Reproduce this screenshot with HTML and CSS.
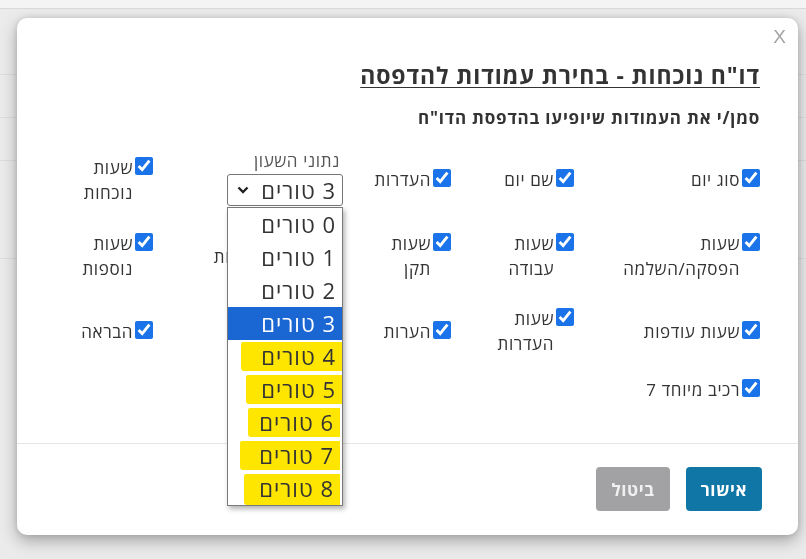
FILE: index.html
```html
<!DOCTYPE html>
<html lang="he" dir="rtl">
<head>
  <meta charset="UTF-8" />
  <meta name="viewport" content="width=device-width, initial-scale=1.0"/>
  <title>דו"ח נוכחות</title>
  <link rel="stylesheet" href="styles.css">
</head>
<body>
  <div class="page">
    <div class="page-top"></div>
    <div class="page-row short"></div>
    <div class="page-row"></div>
    <div class="page-row"></div>
    <div class="page-row tall"></div>
  </div>

  <div class="modal">
    <button class="close">X</button>

    <div class="modal-body">
      <h2 class="title">דו"ח נוכחות - בחירת עמודות להדפסה</h2>
      <p class="subtitle">סמן/י את העמודות שיופיעו בהדפסת הדו"ח</p>

      <div class="columns">
        <!-- row 1 -->
        <label class="opt"><input type="checkbox" checked /><span>סוג יום</span></label>
        <label class="opt"><input type="checkbox" checked /><span>שם יום</span></label>
        <label class="opt"><input type="checkbox" checked /><span>העדרות</span></label>
        <div class="clock">
          <span class="clock-label">נתוני השעון</span>
          <div class="select-wrap">
            <div class="select-box">
              <span>3 טורים</span>
              <svg width="12" height="8" viewBox="0 0 12 8"><path d="M1.5 1.5 6 6l4.5-4.5" fill="none" stroke="#222" stroke-width="2.4"/></svg>
            </div>
            <ul class="dropdown">
              <li>0 טורים</li>
              <li>1 טורים</li>
              <li>2 טורים</li>
              <li class="selected">3 טורים</li>
              <li class="hl"><span class="mark m4">4 טורים</span></li>
              <li class="hl"><span class="mark m5">5 טורים</span></li>
              <li class="hl"><span class="mark m6">6 טורים</span></li>
              <li class="hl"><span class="mark m7">7 טורים</span></li>
              <li class="hl"><span class="mark m8">8 טורים</span></li>
            </ul>
          </div>
        </div>
        <label class="opt"><input type="checkbox" checked /><span>שעות<br>נוכחות</span></label>

        <!-- row 2 -->
        <label class="opt"><input type="checkbox" checked /><span>שעות<br>הפסקה/השלמה</span></label>
        <label class="opt"><input type="checkbox" checked /><span>שעות<br>עבודה</span></label>
        <label class="opt"><input type="checkbox" checked /><span>שעות<br>תקן</span></label>
        <label class="opt nowrap"><input type="checkbox" checked /><span>שעות מאושרות</span></label>
        <label class="opt"><input type="checkbox" checked /><span>שעות<br>נוספות</span></label>

        <!-- row 3 -->
        <label class="opt"><input type="checkbox" checked /><span>שעות עודפות</span></label>
        <label class="opt"><input type="checkbox" checked /><span>שעות<br>העדרות</span></label>
        <label class="opt"><input type="checkbox" checked /><span>הערות</span></label>
        <label class="opt"><input type="checkbox" checked /><span>חופשה</span></label>
        <label class="opt"><input type="checkbox" checked /><span>הבראה</span></label>

        <!-- row 4 -->
        <label class="opt last"><input type="checkbox" checked /><span>רכיב מיוחד 7</span></label>
      </div>
    </div>

    <div class="modal-footer">
      <button class="btn btn-ok">אישור</button>
      <button class="btn btn-cancel">ביטול</button>
    </div>
  </div>
</body>
</html>
```

FILE: styles.css
```css
:root {
  --page-bg: #ebebeb;
  --line: #d9d9d9;
  --text: #333;
  --check: #1a73e8;
  --ok: #0f76a5;
  --cancel: #a2a2a4;
  --marker: #ffe600;
}

* {
  box-sizing: border-box;
}

body {
  margin: 0;
  height: 559px;
  overflow: hidden;
  font-family: "Open Sans", "Liberation Sans", Arial, sans-serif;
  background-color: var(--page-bg);
  color: var(--text);
}

/* page behind the modal */
.page-top {
  height: 9px;
  background: #f4f4f4;
  border-bottom: 1px solid var(--line);
}

.page-row {
  height: 43px;
  border-bottom: 1px solid #dedede;
}

.page-row.short {
  height: 66px;
}

.page-row.tall {
  height: 98px;
}

/* modal */
.modal {
  position: fixed;
  top: 18px;
  left: 17px;
  width: 781px;
  height: 517px;
  background: #fff;
  border-radius: 10px;
  box-shadow: 0 6px 16px rgba(0, 0, 0, 0.3), 0 0 6px rgba(0, 0, 0, 0.12);
  display: flex;
  flex-direction: column;
}

.close {
  position: absolute;
  top: 8px;
  right: 12px;
  border: none;
  background: none;
  font-family: "Liberation Sans", Arial, sans-serif;
  font-size: 19px;
  color: #a3a3a3;
  padding: 0;
  cursor: pointer;
}

.modal-body {
  flex: 1;
  padding: 43px 38px 0 23px;
}

.title {
  margin: 0;
  font-size: 23px;
  letter-spacing: 0.9px;
  line-height: 28px;
  font-weight: bold;
  text-decoration: underline;
  text-decoration-thickness: 1px;
  text-underline-offset: 3px;
  color: #333;
}

.subtitle {
  margin: 18px 0 0;
  font-size: 17px;
  letter-spacing: 0.8px;
  line-height: 22px;
  font-weight: bold;
  color: #333;
}

.columns {
  display: grid;
  grid-template-columns: 186px 123px 108px 190px 1fr;
  align-items: center;
  row-gap: 25px;
  margin-top: 24px;
}

.opt {
  display: flex;
  align-items: flex-start;
  gap: 2px;
  font-size: 17px;
  letter-spacing: 0.6px;
  line-height: 25px;
  color: var(--text);
}

.opt input {
  width: 18px;
  height: 18px;
  margin: 2px 0 0;
  flex-shrink: 0;
  accent-color: var(--check);
}

.opt.nowrap {
  white-space: nowrap;
}

.opt.last {
  margin-top: -4px;
}

/* clock select */
.clock {
  position: relative;
  z-index: 2;
  display: flex;
  flex-direction: column;
  align-items: flex-start;
}

.clock-label {
  font-size: 17px;
  letter-spacing: 0.6px;
  line-height: 16px;
  color: #555;
  margin-right: 3px;
}

.select-wrap {
  position: relative;
  width: 116px;
  margin-top: 5px;
}

.select-box {
  height: 32px;
  border: 1px solid #767676;
  border-radius: 3px;
  display: flex;
  align-items: center;
  justify-content: space-between;
  padding: 0 6px 0 9px;
  font-size: 22px;
  letter-spacing: 1px;
  color: #333;
  background: #fff;
}

.dropdown {
  position: absolute;
  top: 33px;
  right: 0;
  width: 116px;
  margin: 0;
  padding: 0;
  list-style: none;
  background: #fff;
  border: 1px solid #7a7a7a;
  box-shadow: 2px 3px 5px rgba(0, 0, 0, 0.3);
}

.dropdown li {
  height: 33px;
  line-height: 33px;
  font-size: 22px;
  letter-spacing: 1px;
  padding-right: 6px;
  color: #333;
}

.dropdown li.selected {
  background: #1a66d2;
  color: #fff;
}

.dropdown li.hl {
  padding: 2px 0 0;
}

.mark {
  display: block;
  height: 29px;
  line-height: 29px;
  padding-right: 6px;
  background: var(--marker);
  border-radius: 2px 0 0 3px;
}

.m4 { margin-left: 13px; }
.m5 { margin-left: 18px; }
.m6 { margin-left: 20px; margin-right: 2px; }
.m7 { margin-left: 12px; margin-right: 2px; }
.m8 { margin-left: 16px; margin-right: 2px; height: 31px; }

/* footer */
.modal-footer {
  border-top: 1px solid #e5e5e5;
  padding: 23px 36px 24px;
  display: flex;
  gap: 16px;
}

.btn {
  height: 44px;
  border: none;
  border-radius: 4px;
  font-family: inherit;
  font-size: 17px;
  letter-spacing: 0.6px;
  font-weight: bold;
  color: #fff;
  cursor: pointer;
}

.btn-ok {
  width: 76px;
  background: var(--ok);
}

.btn-cancel {
  width: 74px;
  background: var(--cancel);
  color: #f0f0f0;
}
```
